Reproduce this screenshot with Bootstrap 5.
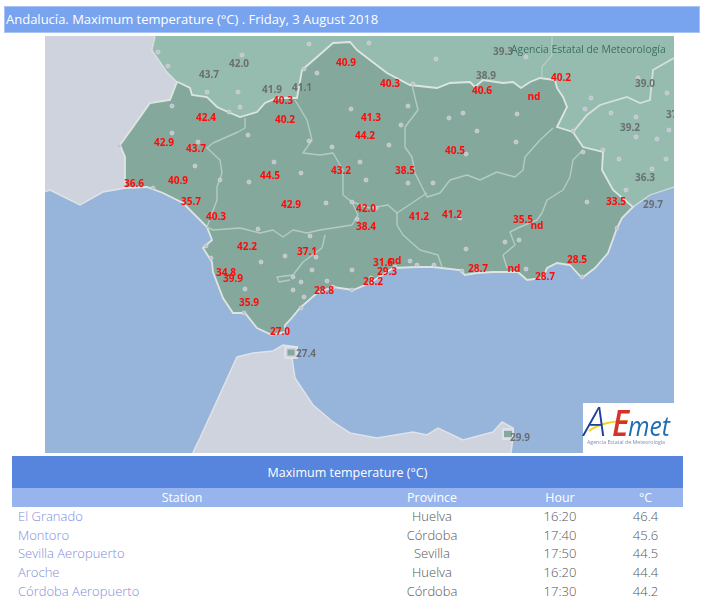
<!DOCTYPE html>
<html lang="en">
<head>
<meta charset="utf-8">
<title>Andalucía. Maximum temperature</title>
<link rel="stylesheet" href="https://cdn.jsdelivr.net/npm/bootstrap@5.3.0/dist/css/bootstrap.min.css">
<style>
html,body{overflow:hidden;background:#fff;}
body{font-family:"Open Sans","Liberation Sans",sans-serif;color:#666;}
.map-head{margin:6px 1px 0 4px;height:27px;line-height:25px;padding-left:1px;background:#78a3ee;border:1px solid #a9c4f4;color:#fff;font-size:13px;white-space:nowrap;}
.map-wrap{margin:3px 27px 0 45px;height:417px;}
.map-wrap svg{display:block;width:629px;height:417px;filter:blur(.35px);}
.sea{fill:#97b4da}.pt{fill:#ced3dd;stroke:#dfe3e8;stroke-width:1.5}
.es{fill:#96bcb0}
.esb{fill:none;stroke:#d3dfdc;stroke-width:1.2}
.an{fill:#84a99c;stroke:#dde5e2;stroke-width:1.8}
.bd{fill:none;stroke:#b4cbc4;stroke-width:1.4;stroke-linejoin:round}
.bo{fill:none;stroke:#d5e0dc;stroke-width:1.8}
.dots circle{r:2px;fill:#c2c4d1;stroke:#d8dae2;stroke-width:.6}
.lab text{font-family:"Open Sans","Liberation Sans",sans-serif;font-weight:700;font-size:10px;text-anchor:middle}
.red text{fill:#ff0a0a}.gry text{fill:#6a6f70}
.aem{font-family:"Open Sans",sans-serif;font-size:10.4px;fill:#3f6e62}
.lg{font-family:"Open Sans",sans-serif;font-style:italic;font-weight:300}
.temp-tbl{margin:3px 18px 0 12px;width:671px;font-size:13px;font-weight:300;table-layout:fixed;--bs-table-color:#555;--bs-table-bg:transparent;--bs-table-striped-bg:#e1ebf0;--bs-table-striped-color:#555;}
.temp-tbl>*>tr>*{padding:1px 0 0;border:0;height:18.7px;line-height:17.7px;text-align:center;font-weight:300;box-shadow:none;}
.temp-tbl thead tr:first-child th{background:#5785dd;color:#fff;height:32px;line-height:31px;font-size:12.5px;font-weight:400;}
.temp-tbl thead tr:last-child th{background:#97b5ec;color:#fff;height:19px;line-height:18px;font-weight:400;font-size:12.4px;}
.temp-tbl td:first-child{text-align:left;padding-left:6px;}
.temp-tbl a{color:#7f8edb;text-decoration:none;}
</style>
</head>
<body>
<div class="map-head">Andalucía. Maximum temperature (°C) . Friday, 3 August 2018</div>
<div class="map-wrap">
<svg viewBox="45 36 629 417" xmlns="http://www.w3.org/2000/svg" role="img" aria-label="Map of Andalucía">
<rect class="sea" x="45" y="36" width="629" height="417"/>
<polygon class="pt" points="40,30 156,30 155,37 152,50 167,72 177,82 170,100 150,103 133,127 120,145 125,157 125,188 103,192 80,205 50,190 40,193"/>
<polygon class="pt" points="190,460 195,448 200,438 237,357 253,353 273,351 283,345 297,347 297,357 292,358 295,378 313,405 333,422 350,433 377,438 413,432 427,435 438,428 463,440 493,432 502,422 513,428 513,438 510,460"/>
<polygon class="es" points="156,30 680,30 680,185 673,187 650,195 633,207 560,230 300,200 200,130 177,82 167,72 152,50 155,37"/>
<path class="esb" d="M155,37L152,50 167,72 177,82M674,187L650,195 633,207"/>
<polygon class="an" points="177,82 180,83 190,88 192,95 207,97 217,107 228,112 240,117 257,112 265,103 277,98 297,98 302,70 317,57 333,43 350,42 357,50 370,60 387,73 410,85 437,88 450,83 470,82 475,87 483,80 503,83 513,82 521,88 530,82 540,78 555,80 557,88 563,97 567,107 557,127 573,132 583,147 603,152 602,170 613,190 633,207 622,218 617,228 608,253 595,268 582,278 570,265 557,263 547,268 543,278 527,280 518,272 493,272 477,273 465,275 460,270 433,267 417,267 393,268 370,283 353,290 333,287 317,293 300,308 290,320 285,325 285,332 272,335 257,328 245,313 233,313 223,298 218,285 213,272 212,262 203,248 212,240 207,227 183,203 163,193 147,187 125,188 125,157 120,145 133,127 150,103 170,100"/>
<path class="bd" d="M542,78V67L552,55V36"/>
<path class="bo" d="M573,132L587,115 600,105 627,97 640,103 650,100 653,70 674,58"/>
<path class="bd" d="M245,118V128L238,132 213,143 207,148 220,160 222,173 217,187 217,200 207,227"/>
<path class="bd" d="M295,100L307,120 312,140 303,153 320,155 333,153 343,170 343,195 352,202 370,208 388,205 397,213 427,193"/>
<path class="bd" d="M412,85L418,110 405,127V147L412,157 415,173 427,197 440,193 450,180 467,175 480,180 497,172 515,177 523,170 525,157 540,140 553,128"/>
<path class="bd" d="M397,213V225L403,235 420,250 438,255 442,267"/>
<path class="bd" d="M583,150L573,160 570,177 563,190 547,200 542,213 537,220 520,227 510,232 515,245 503,255 507,268"/>
<path class="bd" d="M207,227L213,230 240,228 260,233 273,230 283,237 293,230 307,233 320,230 352,225 358,215 352,202"/>
<path class="bd" d="M325,235L322,248 303,262 293,275 277,277 279,282 290,280"/>
<rect x="285" y="347" width="12" height="11" fill="#ced3dd" stroke="#e3e6ea" stroke-width="1.5"/>
<rect x="287.500" y="349.500" width="7" height="6" fill="#84a99c"/>
<rect x="503" y="429" width="10" height="10" fill="#ced3dd" stroke="#e3e6ea" stroke-width="1.5"/>
<rect x="504" y="431" width="8" height="6" fill="#84a99c"/>
<g class="dots">
<circle cx="158" cy="52"/><circle cx="168" cy="66"/><circle cx="207" cy="92"/><circle cx="238" cy="92"/><circle cx="240" cy="107"/><circle cx="242" cy="55"/><circle cx="309" cy="44"/><circle cx="304" cy="69"/><circle cx="317" cy="73"/><circle cx="172" cy="106"/><circle cx="229" cy="112"/><circle cx="172" cy="133"/><circle cx="198" cy="142"/><circle cx="119" cy="146"/><circle cx="195" cy="166"/><circle cx="153" cy="188"/><circle cx="220" cy="180"/><circle cx="248" cy="135"/><circle cx="309" cy="141"/><circle cx="332" cy="147"/><circle cx="274" cy="162"/><circle cx="301" cy="173"/><circle cx="249" cy="182"/><circle cx="326" cy="203"/><circle cx="258" cy="229"/>
<circle cx="369" cy="43"/><circle cx="436" cy="59"/><circle cx="526" cy="57"/><circle cx="413" cy="84"/><circle cx="408" cy="106"/><circle cx="351" cy="109"/><circle cx="401" cy="125"/><circle cx="449" cy="118"/><circle cx="463" cy="113"/><circle cx="517" cy="114"/><circle cx="477" cy="131"/><circle cx="389" cy="145"/><circle cx="516" cy="142"/><circle cx="466" cy="154"/><circle cx="360" cy="162"/><circle cx="366" cy="180"/><circle cx="408" cy="183"/><circle cx="433" cy="183"/><circle cx="352" cy="202"/><circle cx="376" cy="208"/><circle cx="357" cy="219"/><circle cx="460" cy="218"/><circle cx="591" cy="98"/><circle cx="585" cy="109"/><circle cx="611" cy="113"/><circle cx="636" cy="117"/><circle cx="667" cy="93"/><circle cx="638" cy="78"/><circle cx="669" cy="130"/><circle cx="636" cy="137"/><circle cx="657" cy="139"/><circle cx="573" cy="131"/><circle cx="583" cy="152"/><circle cx="603" cy="150"/><circle cx="619" cy="159"/><circle cx="666" cy="159"/><circle cx="652" cy="169"/><circle cx="626" cy="190"/><circle cx="587" cy="202"/><circle cx="617" cy="228"/>
<circle cx="310" cy="236"/><circle cx="206" cy="246"/><circle cx="211" cy="258"/><circle cx="261" cy="262"/><circle cx="285" cy="256"/><circle cx="316" cy="257"/><circle cx="312" cy="270"/><circle cx="293" cy="277"/><circle cx="301" cy="282"/><circle cx="327" cy="281"/><circle cx="245" cy="289"/><circle cx="293" cy="290"/><circle cx="333" cy="287"/><circle cx="304" cy="297"/><circle cx="301" cy="308"/><circle cx="244" cy="313"/>
<circle cx="505" cy="242"/><circle cx="519" cy="240"/><circle cx="466" cy="249"/><circle cx="410" cy="261"/><circle cx="417" cy="265"/><circle cx="434" cy="265"/><circle cx="395" cy="267"/><circle cx="352" cy="270"/><circle cx="371" cy="278"/><circle cx="352" cy="290"/><circle cx="462" cy="271"/><circle cx="476" cy="271"/><circle cx="526" cy="269"/><circle cx="582" cy="277"/>
</g>
<g class="lab gry">
<text x="209" y="78">43.7</text><text x="239" y="67">42.0</text><text x="272" y="93">41.9</text><text x="302" y="91">41.1</text><text x="486" y="79">38.9</text><text x="503" y="55">39.3</text><text x="645" y="87">39.0</text><text x="676" y="118">37.6</text><text x="630" y="131">39.2</text><text x="645" y="181">36.3</text><text x="653" y="208">29.7</text><text x="306" y="357">27.4</text><text x="520" y="441">29.9</text>
</g>
<text class="aem" x="511" y="53">Agencia Estatal de Meteorología</text>
<g class="lab red">
<text x="206" y="121">42.4</text><text x="283" y="104">40.3</text><text x="285" y="123">40.2</text><text x="346" y="66">40.9</text><text x="164" y="146">42.9</text><text x="196" y="152">43.7</text><text x="270" y="179">44.5</text><text x="341" y="174">43.2</text><text x="134" y="187">36.6</text><text x="178" y="184">40.9</text><text x="191" y="205">35.7</text><text x="291" y="208">42.9</text><text x="216" y="220">40.3</text>
<text x="390" y="87">40.3</text><text x="482" y="94">40.6</text><text x="561" y="81">40.2</text><text x="534" y="100">nd</text><text x="371" y="121">41.3</text><text x="365" y="139">44.2</text><text x="455" y="154">40.5</text><text x="405" y="174">38.5</text><text x="616" y="205">33.5</text><text x="366" y="212">42.0</text><text x="419" y="220">41.2</text><text x="452" y="218">41.2</text><text x="523" y="223">35.5</text><text x="537" y="229">nd</text><text x="366" y="230">38.4</text>
<text x="247" y="250">42.2</text><text x="307" y="255">37.1</text><text x="226" y="276">34.8</text><text x="233" y="282">39.9</text><text x="249" y="306">35.9</text><text x="324" y="294">28.8</text><text x="280" y="335">27.0</text>
<text x="383" y="266">31.6</text><text x="395" y="264">nd</text><text x="387" y="275">29.3</text><text x="373" y="285">28.2</text><text x="478" y="272">28.7</text><text x="514" y="272">nd</text><text x="545" y="280">28.7</text><text x="577" y="263">28.5</text>
</g>
<rect x="583" y="403" width="91" height="50" fill="#fff"/>
<path d="M589,431C598,424 610,421 628,421" fill="none" stroke="#f2d41c" stroke-width="2.2"/>
<text class="lg" x="584" y="436" font-size="40" fill="#1c3f9c">A</text>
<text class="lg" x="612" y="436" font-size="36" fill="#d4322a" style="font-weight:600" textLength="17" lengthAdjust="spacingAndGlyphs">E</text>
<text class="lg" x="628" y="436" font-size="28" fill="#1f6db3" style="font-weight:400" textLength="42" lengthAdjust="spacingAndGlyphs">met</text>
<text x="587" y="444" font-size="5.300" fill="#7f8fb5" font-family="Open Sans" textLength="78">Agencia Estatal de Meteorología</text>
</svg>
</div>
<table class="table table-striped temp-tbl">
<colgroup><col style="width:340px"><col style="width:160px"><col style="width:96px"><col></colgroup>
<thead>
<tr><th colspan="4">Maximum temperature (°C)</th></tr>
<tr><th>Station</th><th>Province</th><th>Hour</th><th>°C</th></tr>
</thead>
<tbody>
<tr><td><a href="#">El Granado</a></td><td>Huelva</td><td>16:20</td><td>46.4</td></tr>
<tr><td><a href="#">Montoro</a></td><td>Córdoba</td><td>17:40</td><td>45.6</td></tr>
<tr><td><a href="#">Sevilla Aeropuerto</a></td><td>Sevilla</td><td>17:50</td><td>44.5</td></tr>
<tr><td><a href="#">Aroche</a></td><td>Huelva</td><td>16:20</td><td>44.4</td></tr>
<tr><td><a href="#">Córdoba Aeropuerto</a></td><td>Córdoba</td><td>17:30</td><td>44.2</td></tr>
</tbody>
</table>
<script src="https://cdn.jsdelivr.net/npm/bootstrap@5.3.0/dist/js/bootstrap.bundle.min.js"></script>
</body>
</html>
